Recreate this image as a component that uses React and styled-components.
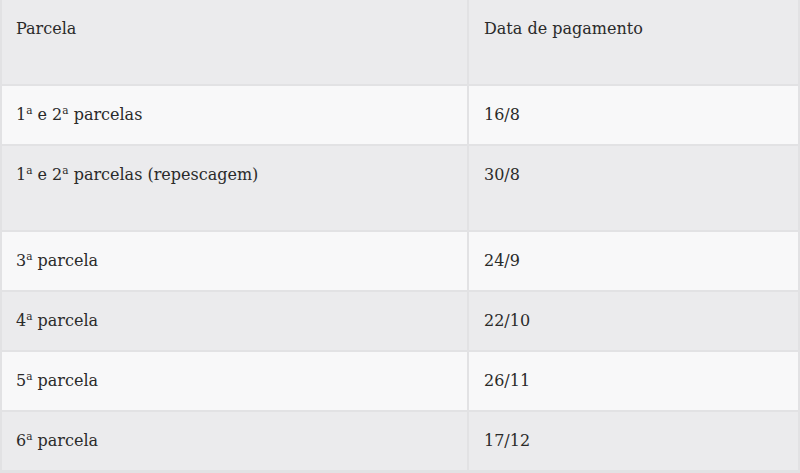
import styled, { createGlobalStyle } from "styled-components";

const GlobalStyle = createGlobalStyle`
  body {
    margin: 0;
    background: #f3f3f4;
  }
`;

const rows = [
  { n: "1", rest: " e 2", rest2: " parcelas", date: "16/8" },
  { n: "1", rest: " e 2", rest2: " parcelas (repescagem)", date: "30/8", tall: true },
  { n: "3", rest2: " parcela", date: "24/9" },
  { n: "4", rest2: " parcela", date: "22/10" },
  { n: "5", rest2: " parcela", date: "26/11" },
  { n: "6", rest2: " parcela", date: "17/12" },
];

const App = () => {
  return (
    <>
      <GlobalStyle />
      <Table_div>
        <Cell_div $tall>Parcela</Cell_div>
        <Cell_div $tall $right>Data de pagamento</Cell_div>

        {rows.map((r, i) => (
          <Row key={i} r={r} odd={i % 2 === 0} />
        ))}
      </Table_div>
    </>
  );
};

// uma linha da tabela = duas células
const Row = ({ r, odd }) => (
  <>
    <Cell_div $light={odd} $tall={r.tall}>
      {r.n}
      <Sup_span>a</Sup_span>
      {r.rest && (
        <>
          {r.rest}
          <Sup_span>a</Sup_span>
        </>
      )}
      {r.rest2}
    </Cell_div>
    <Cell_div $light={odd} $tall={r.tall} $right>
      {r.date}
    </Cell_div>
  </>
);

const Table_div = styled.div`
  width: 800px;
  height: 473px;
  box-sizing: border-box;
  display: grid;
  grid-template-columns: 465px 1fr;
  grid-auto-rows: min-content;
  gap: 2px;
  padding: 0 2px 2px 2px;
  background: #e2e2e4;
  overflow: hidden;
`;

const Cell_div = styled.div`
  box-sizing: border-box;
  height: ${({ $tall }) => ($tall ? "84px" : "58px")};
  padding: 18px 14px 0 ${({ $right }) => ($right ? "15px" : "14px")};
  background: ${({ $light }) => ($light ? "#f8f8f9" : "#ebebed")};
  color: #2a2a2a;
  font-family: "DejaVu Serif", serif;
  font-size: 16px;
  line-height: 22px;
  white-space: nowrap;
`;

const Sup_span = styled.span`
  font-size: 10.5px;
  vertical-align: 6px;
  line-height: 0;
`;

export default App;
